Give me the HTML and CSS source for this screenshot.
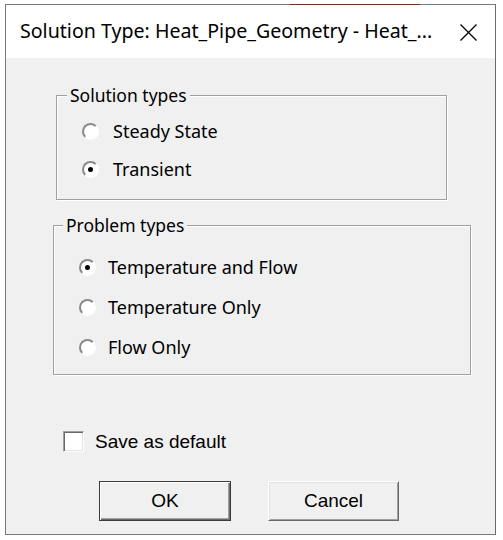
FILE: index.html
```html
<!DOCTYPE html>
<html>
<head>
<meta charset="utf-8">
<link rel="stylesheet" href="styles.css">
</head>
<body>
<div class="window">
  <div class="topmark"></div>
  <div class="titlebar">
    <span class="title">Solution Type: Heat_Pipe_Geometry - Heat_...</span>
    <svg class="close" width="17" height="17" viewBox="0 0 17 17"><path d="M0.5 0.5 L16.5 16.5 M16.5 0.5 L0.5 16.5" stroke="#000" stroke-width="1.3" fill="none"/></svg>
  </div>
  <div class="client">
    <div class="group group1">
      <span class="legend">Solution types</span>
      <div class="options opts1">
        <div class="row"><span class="radio"></span><span class="label">Steady State</span></div>
        <div class="row"><span class="radio"><span class="dot"></span></span><span class="label">Transient</span></div>
      </div>
    </div>
    <div class="group group2">
      <span class="legend">Problem types</span>
      <div class="options opts2">
        <div class="row"><span class="radio"><span class="dot"></span></span><span class="label">Temperature and Flow</span></div>
        <div class="row"><span class="radio"></span><span class="label">Temperature Only</span></div>
        <div class="row"><span class="radio"></span><span class="label">Flow Only</span></div>
      </div>
    </div>
    <div class="checkrow"><span class="checkbox"></span><span class="checklabel">Save as default</span></div>
    <div class="buttons">
      <div class="btn default">OK</div>
      <div class="btn cancel">Cancel</div>
    </div>
  </div>
</div>
</body>
</html>
```
FILE: styles.css
```css
html, body { margin: 0; padding: 0; background: #fff; }
body { font-family: "Noto Sans", "Open Sans", sans-serif; color: #000; }

.window {
  position: relative;
  margin: 4px 0 0 5px;
  width: 491px;
  height: 531px;
  box-sizing: border-box;
  border: 1px solid #7a7a7a;
  border-right-color: #6a6a6a;
  background: #f0f0f0;
}
.topmark {
  position: absolute;
  top: -1px;
  left: 284px;
  width: 130px;
  height: 1px;
  background: #9b1c1c;
}
.titlebar {
  height: 53px;
  background: #fff;
  display: flex;
  align-items: center;
  justify-content: space-between;
  padding: 0 18px 0 14px;
}
.title { font-size: 19.6px; white-space: nowrap; margin-top: -2px; }
.close { display: block; margin-top: 1px; }

.client { display: flex; flex-direction: column; align-items: flex-start; }

.group {
  box-sizing: border-box;
  border: 1px solid #a0a0a0;
  box-shadow: 1px 1px 0 #fff, inset 1px 1px 0 #fff;
}
.group1 { margin: 37px 0 0 50px; width: 391px; height: 105px; }
.group2 { margin: 25px 0 0 47px; width: 418px; height: 150px; }

.legend {
  display: block;
  width: max-content;
  margin: -12px 0 0 10px;
  padding: 0 3px;
  background: #f0f0f0;
  line-height: 22px;
  font-size: 17.5px;
}
.group2 .legend { margin-left: 9px; }

.options { display: flex; flex-direction: column; }
.opts1 { margin-top: 6px; padding-left: 25px; }
.opts1 .row { height: 38px; gap: 14px; }
.opts2 { margin-top: 11px; padding-left: 25px; }
.opts2 .row { height: 40px; gap: 12px; }

.row { display: flex; align-items: center; }
.label { font-size: 18px; }

.radio {
  width: 13px; height: 13px;
  border: 2px solid;
  border-color: #8a8a8a #fff #fff #8a8a8a;
  border-radius: 50%;
  background: #fff;
  display: flex;
  align-items: center;
  justify-content: center;
  flex: none;
}
.dot { width: 5px; height: 5px; border-radius: 50%; background: #000; }

.checkrow {
  display: flex;
  align-items: center;
  gap: 11px;
  margin: 56px 0 0 57px;
  height: 21px;
}
.checkbox {
  width: 21px; height: 21px;
  box-sizing: border-box;
  background: #fff;
  border: 1px solid;
  border-color: #a0a0a0 #fff #fff #a0a0a0;
  box-shadow: inset 1px 1px 0 #696969, inset -1px -1px 0 #e3e3e3;
}
.checklabel { font-family: "Liberation Sans", Arial, sans-serif; font-size: 19px; }

.buttons { display: flex; gap: 37px; margin: 29px 0 0 93px; }
.btn {
  box-sizing: border-box;
  height: 40px;
  display: flex;
  align-items: center;
  justify-content: center;
  font-family: "Liberation Sans", Arial, sans-serif;
  font-size: 19px;
  background: #f0f0f0;
}
.btn.default {
  width: 132px;
  border: 1px solid #3c3c3c;
  box-shadow: inset 1px 1px 0 #fff, inset -1px -1px 0 #696969, inset -2px -2px 0 #a0a0a0;
}
.btn.cancel {
  width: 131px;
  border: 1px solid;
  border-color: #fff #696969 #696969 #fff;
  box-shadow: inset 1px 1px 0 #e3e3e3, inset -1px -1px 0 #a0a0a0;
}
```
